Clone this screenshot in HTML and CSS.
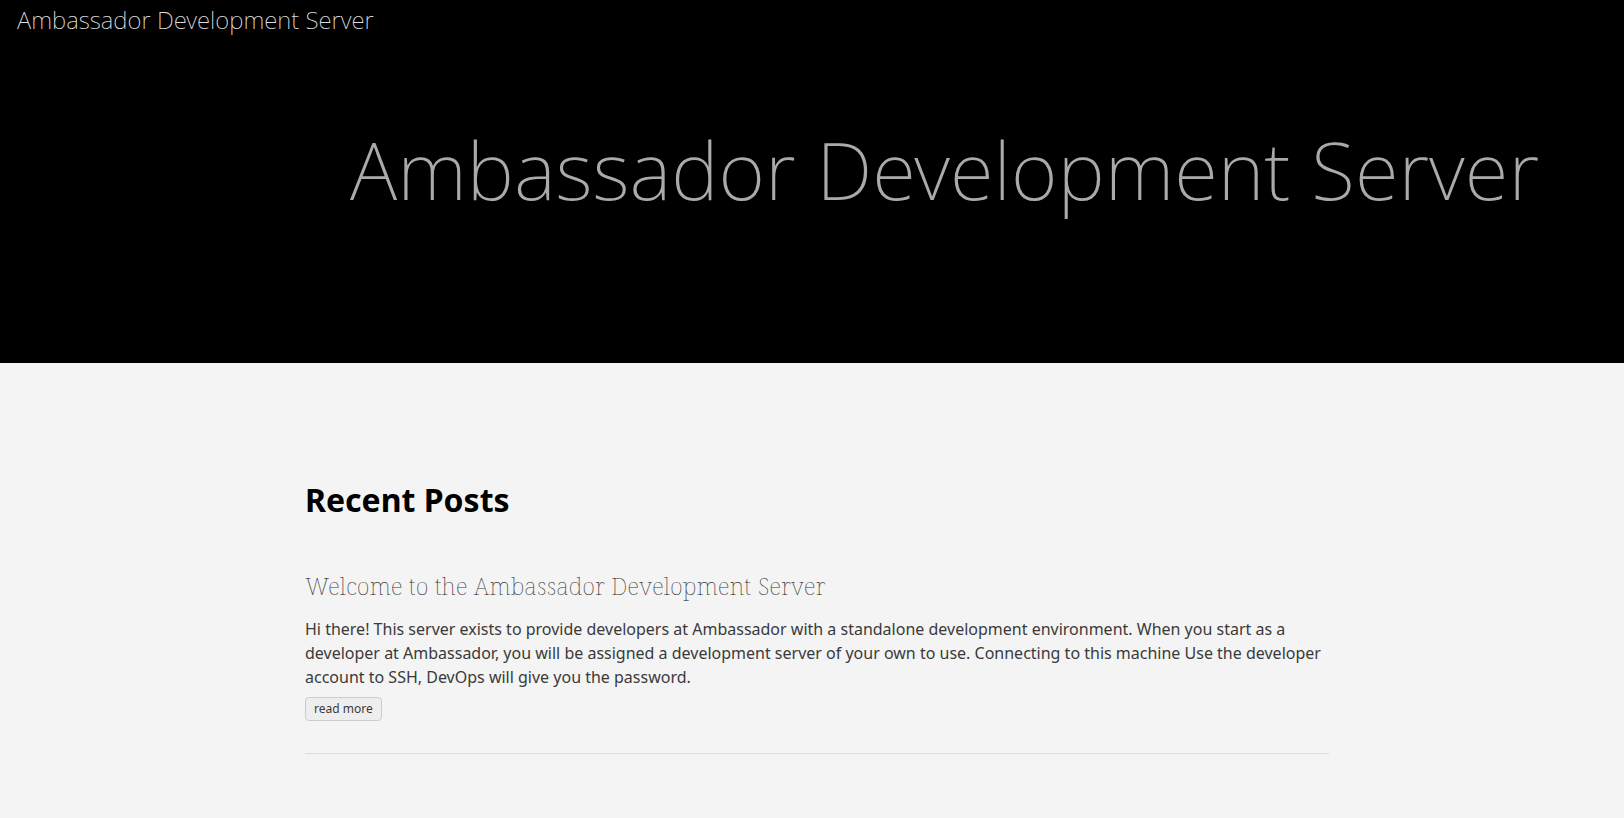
FILE: index.html
```html
<!DOCTYPE html>
<html lang="en">
<head>
<meta charset="utf-8">
<title>Ambassador Development Server</title>
<link rel="stylesheet" href="styles.css">
</head>
<body>
<header class="banner">
  <a class="brand" href="#">Ambassador Development Server</a>
  <h1 class="title">Ambassador Development Server</h1>
</header>
<main class="content">
  <h2 class="section-title">Recent Posts</h2>
  <article class="post">
    <h3 class="post-title"><a href="#">Welcome to the Ambassador Development Server</a></h3>
    <p class="excerpt">Hi there! This server exists to provide developers at Ambassador with a standalone development environment. When you start as a developer at Ambassador, you will be assigned a development server of your own to use. Connecting to this machine Use the developer account to SSH, DevOps will give you the password.</p>
    <a class="more" href="#">read more</a>
  </article>
</main>
</body>
</html>
```

FILE: styles.css
```css
* { box-sizing: border-box; }
body {
  margin: 0;
  background: #f4f4f4;
  color: #3a3a3a;
  font: 16px/24px "Noto Sans", sans-serif;
}
a { color: inherit; text-decoration: none; }
.banner {
  background: #000;
  color: #aaa;
  padding-bottom: 134px;
}
.brand {
  display: block;
  padding: 4px 17px;
  font-size: 24px;
  line-height: 32px;
  font-weight: 200;
  color: #ddd;
}
.title {
  margin: 0;
  padding: 69px 0 0 350px;
  font-size: 80px;
  line-height: 120px;
  font-weight: 200;
  white-space: nowrap;
}
.content {
  max-width: 1024px;
  margin-left: 305px;
  padding-top: 113px;
}
.section-title {
  margin: 0;
  font-size: 32px;
  line-height: 48px;
  font-weight: 700;
  color: #000;
}
.post {
  margin-top: 44px;
  padding-bottom: 32px;
  border-bottom: 1px solid #ddd;
}
.post-title {
  margin: 0 0 13px;
  font: 100 24px/36px "Noto Serif", "DejaVu Serif", serif;
}
.excerpt { margin: 0 0 6px; }
.more {
  display: inline-block;
  padding: 0 8px;
  border: 1px solid #ccc;
  border-radius: 4px;
  background: #eee;
  font-size: 12px;
  line-height: 22px;
}
```
